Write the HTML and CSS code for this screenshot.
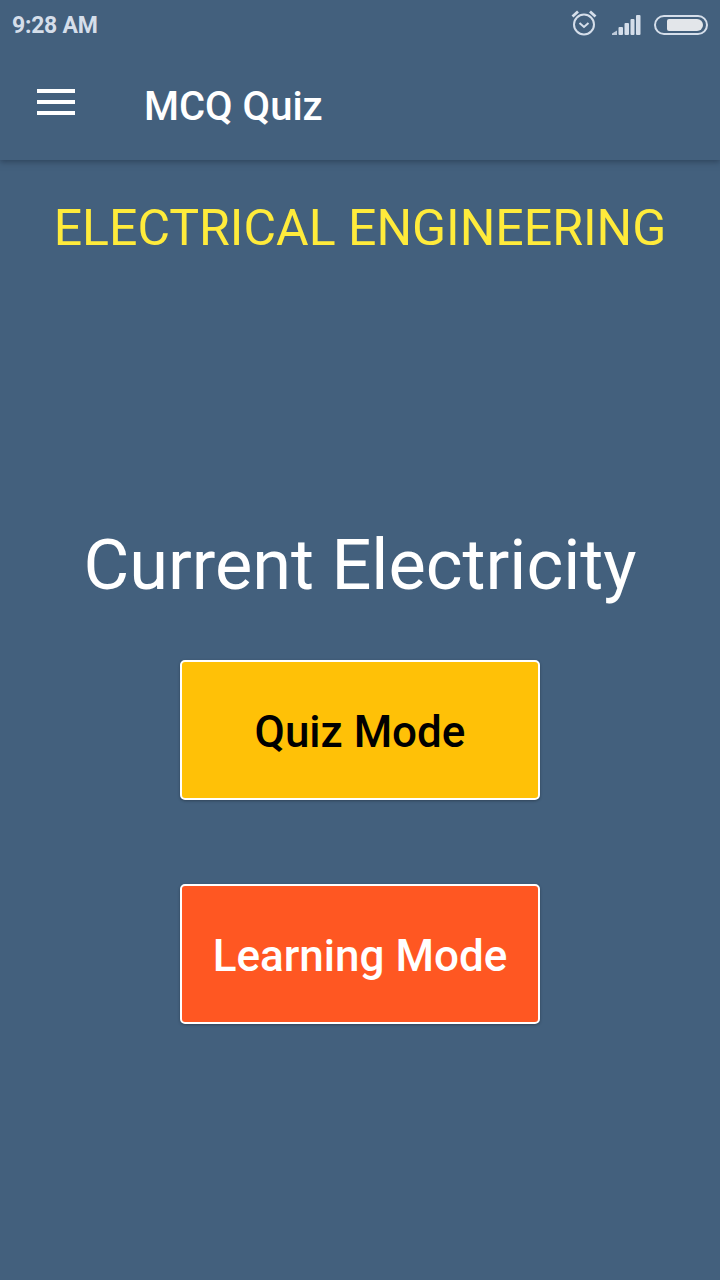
FILE: index.html
```html
<!DOCTYPE html>
<html lang="en">
<head>
<meta charset="utf-8">
<title>MCQ Quiz</title>
<link rel="stylesheet" href="styles.css">
</head>
<body>
<div class="screen">
  <header class="appbar">
    <div class="statusbar">
      <span class="time">9:28 AM</span>
      <div class="status-icons">
        <svg class="ic-alarm" width="28" height="28" viewBox="0 0 28 28" fill="none" stroke="#d5deea">
          <circle cx="14" cy="15.500" r="10" stroke-width="2"/>
          <path d="M9.500 14 14 18l4.500-4" stroke-width="2"/>
          <path d="M2.500 7.500 8 2.500M25.500 7.500 20 2.500" stroke-width="2.800"/>
        </svg>
        <svg class="ic-signal" width="30" height="22" viewBox="0 0 30 22" fill="#d5deea">
          <path d="M1 21v-1.500l5-3v4.500z" opacity=".85"/>
          <rect x="7.500" y="13" width="4.500" height="8" rx="1"/>
          <rect x="13.500" y="9" width="4.500" height="12" rx="1"/>
          <rect x="19.500" y="5" width="4" height="16" rx="1"/>
          <rect x="25" y="1" width="4.500" height="20" rx="1"/>
        </svg>
        <div class="battery"><div class="battery-fill"></div></div>
      </div>
    </div>
    <div class="toolbar">
      <button class="menu" aria-label="Menu"><span></span><span></span><span></span></button>
      <h1 class="app-title">MCQ Quiz</h1>
    </div>
  </header>
  <main class="content">
    <h2 class="subject">ELECTRICAL ENGINEERING</h2>
    <h3 class="topic">Current Electricity</h3>
    <button class="mode mode-quiz">Quiz Mode</button>
    <button class="mode mode-learn">Learning Mode</button>
  </main>
</div>
</body>
</html>
```
FILE: styles.css
```css
* { box-sizing: border-box; }
html, body { margin: 0; padding: 0; }
body { font-family: Roboto, "Noto Sans", sans-serif; background: #43607d; }
.screen { width: 720px; height: 1280px; background: #43607d; display: flex; flex-direction: column; overflow: hidden; }
.appbar { height: 160px; background: #43607d; box-shadow: 0 2px 6px rgba(30, 45, 65, .55); position: relative; flex: none; }
.statusbar { height: 50px; display: flex; align-items: center; justify-content: space-between; padding: 0 12px 0 12px; }
.time { color: #d5deea; font-size: 23px; font-weight: 700; letter-spacing: -.25px; margin-top: 1px; }
.status-icons { display: flex; align-items: center; }
.ic-alarm { margin-right: 13px; margin-top: -4px; }
.ic-signal { margin-right: 13px; margin-top: 0; }
.battery { width: 54px; height: 20px; border: 2px solid #d5deea; border-radius: 10px; padding: 2px 3px 2px 11px; margin-top: -1px; }
.battery-fill { width: 100%; height: 100%; background: #e3e6ea; border-radius: 2px 6px 6px 2px; }
.toolbar { height: 110px; display: flex; align-items: center; padding-left: 37px; }
.menu { width: 38px; height: 26px; padding: 0; border: 0; background: none; display: flex; flex-direction: column; justify-content: space-between; margin: -6px 69px 0 0; }
.menu span { display: block; height: 4px; background: #fff; }
.app-title { margin: 4px 0 0; color: #fff; font-size: 40px; font-weight: 500; line-height: 1; }
.content { flex: 1; display: flex; flex-direction: column; align-items: center; }
.subject { margin: 39px 0 0; color: #ffeb3b; font-size: 50px; font-weight: 400; line-height: 58px; }
.topic { margin: 268px 0 0; color: #fff; font-size: 70.300px; font-weight: 400; line-height: 80px; }
.mode { width: 360px; height: 140px; padding: 4px 0 0; border: 2px solid #fff; border-radius: 5px; font-family: inherit; font-size: 44px; font-weight: 500; box-shadow: 0 1px 3px rgba(0, 0, 0, .3); }
.mode-quiz { margin-top: 55px; background: #ffc107; color: #000; }
.mode-learn { margin-top: 84px; background: #ff5722; color: #fff; }
```
